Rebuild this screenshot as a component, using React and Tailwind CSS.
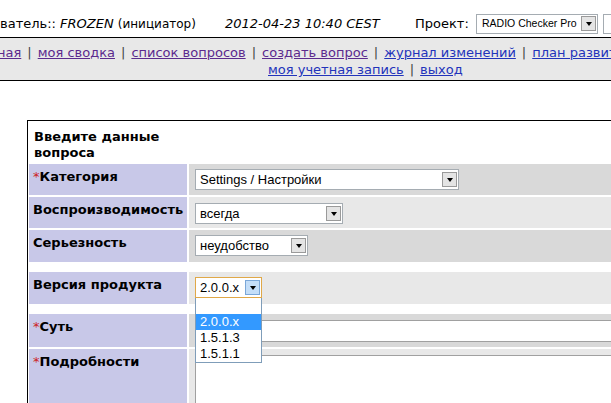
import React from "react";

const Arrow = ({ active }) => (
  <div
    className={
      active
        ? "flex h-[15px] w-[15px] shrink-0 items-center justify-center border border-[#7aa7d8] bg-[#c4def8]"
        : "flex h-[15px] w-[15px] shrink-0 items-center justify-center border border-[#9a9a9a] bg-[#e4e4e4]"
    }
  >
    <div className="h-0 w-0 border-x-[3.5px] border-t-[4px] border-x-transparent border-t-black" />
  </div>
);

const Select = ({ value, width, active }) => (
  <div
    className={
      "flex h-[21px] items-center justify-between border bg-white pl-[4px] pr-[1px] font-['Liberation_Sans',Arial,sans-serif] text-[13px] " +
      (active ? "border-[#e0a848]" : "border-[#a5acb2]")
    }
    style={{ width }}
  >
    <span className="whitespace-nowrap">{value}</span>
    <Arrow active={active} />
  </div>
);

const Label = ({ required, children }) => (
  <div className="w-[158px] shrink-0 bg-[#c8c8e8] pl-[4px] pt-[5px] font-bold leading-[16px]">
    {required && <span className="font-normal text-[#cc2222]">*</span>}
    {children}
  </div>
);

const Sep = () => <span className="px-[6px] text-[#444]">|</span>;

const versions = ["", "2.0.0.x", "1.5.1.3", "1.5.1.1"];

export default function App() {
  return (
    <div className="h-[403px] w-[611px] overflow-hidden bg-white font-['DejaVu_Sans',Verdana,sans-serif] text-[13px] text-black">
      {/* user / date / project */}
      <div className="flex h-[37px] items-center whitespace-nowrap pt-[10px]">
        <div className="w-[225px] shrink-0">
          ватель:: <i>FROZEN</i> <span className="text-[12px]">(инициатор)</span>
        </div>
        <div className="w-[190px] shrink-0 italic">2012-04-23 10:40 CEST</div>
        <div className="w-[61px] shrink-0">Проект:</div>
        <div className="flex h-[20px] w-[122px] shrink-0 items-center justify-between overflow-hidden border border-[#a5acb2] pl-[5px] pr-[1px] font-['Liberation_Sans',Arial,sans-serif] text-[10.5px]">
          <span>RADIO Checker Pro</span>
          <Arrow />
        </div>
        <div className="ml-[5px] h-[20px] w-[40px] shrink-0 border border-[#a5acb2]" />
      </div>

      {/* menu */}
      <div className="h-[44px] whitespace-nowrap border-y border-black bg-[#e8e8e8] pt-[6px] leading-[17px]">
        <div className="-ml-[3px]">
          <a className="text-[#5b2a8e] underline">ная</a>
          <Sep />
          <a className="text-[#5b2a8e] underline">моя сводка</a>
          <Sep />
          <a className="text-[#5b2a8e] underline">список вопросов</a>
          <Sep />
          <a className="text-[#5b2a8e] underline">создать вопрос</a>
          <Sep />
          <a className="text-[#2233bb] underline">журнал изменений</a>
          <Sep />
          <a className="text-[#2233bb] underline">план развития</a>
        </div>
        <div className="pl-[268px]">
          <a className="text-[#2233bb] underline">моя учетная запись</a>
          <Sep />
          <a className="text-[#2233bb] underline">выход</a>
        </div>
      </div>

      {/* form */}
      <div className="ml-[27px] mt-[39px] border-l border-t border-black pl-[1px] pt-[1px]">
        <div className="h-[41px] w-[158px] pl-[5px] pt-[7px] font-bold leading-[16px]">
          Введите данные вопроса
        </div>

        <div className="mt-[1px] flex h-[31px] gap-[2px]">
          <Label required>Категория</Label>
          <div className="flex-1 bg-[#d9d9d9] pl-[6px] pt-[5px]">
            <Select value="Settings / Настройки" width={264} />
          </div>
        </div>

        <div className="mt-[2px] flex h-[31px] gap-[2px]">
          <Label>Воспроизводимость</Label>
          <div className="flex-1 bg-[#e8e8e8] pl-[6px] pt-[6px]">
            <Select value="всегда" width={148} />
          </div>
        </div>

        <div className="mt-[2px] flex h-[32px] gap-[2px]">
          <Label>Серьезность</Label>
          <div className="flex-1 bg-[#d9d9d9] pl-[6px] pt-[5px]">
            <Select value="неудобство" width={113} />
          </div>
        </div>

        <div className="h-[10px]" />

        <div className="flex h-[32px] gap-[2px]">
          <Label>Версия продукта</Label>
          <div className="flex-1 bg-[#e8e8e8] pl-[6px] pt-[5px]">
            <div className="relative w-[67px]">
              <Select value="2.0.0.x" width={67} active />
              <div className="absolute left-0 top-full z-10 w-[67px] border border-[#7f9db9] border-t-0 bg-white font-['Liberation_Sans',Arial,sans-serif] text-[13px] leading-[16px]">
                {versions.map((v) => (
                  <div
                    key={v || "blank"}
                    className={
                      v === "2.0.0.x"
                        ? "h-[16px] bg-[#3399ff] pl-[4px] text-white"
                        : "h-[16px] pl-[4px]"
                    }
                  >
                    {v}
                  </div>
                ))}
              </div>
            </div>
          </div>
        </div>

        <div className="h-[10px]" />

        <div className="flex h-[33px] gap-[2px]">
          <Label required>Суть</Label>
          <div className="flex-1 overflow-hidden bg-[#d9d9d9] pl-[6px] pt-[6px]">
            <div className="h-[22px] w-[500px] border border-[#a0a0a0] bg-white" />
          </div>
        </div>

        <div className="mt-[2px] flex h-[80px] gap-[2px]">
          <Label required>Подробности</Label>
          <div className="flex-1 overflow-hidden bg-[#e8e8e8] pl-[6px] pt-[6px]">
            <div className="h-[120px] w-[500px] border border-[#a0a0a0] bg-white" />
          </div>
        </div>
      </div>
    </div>
  );
}
